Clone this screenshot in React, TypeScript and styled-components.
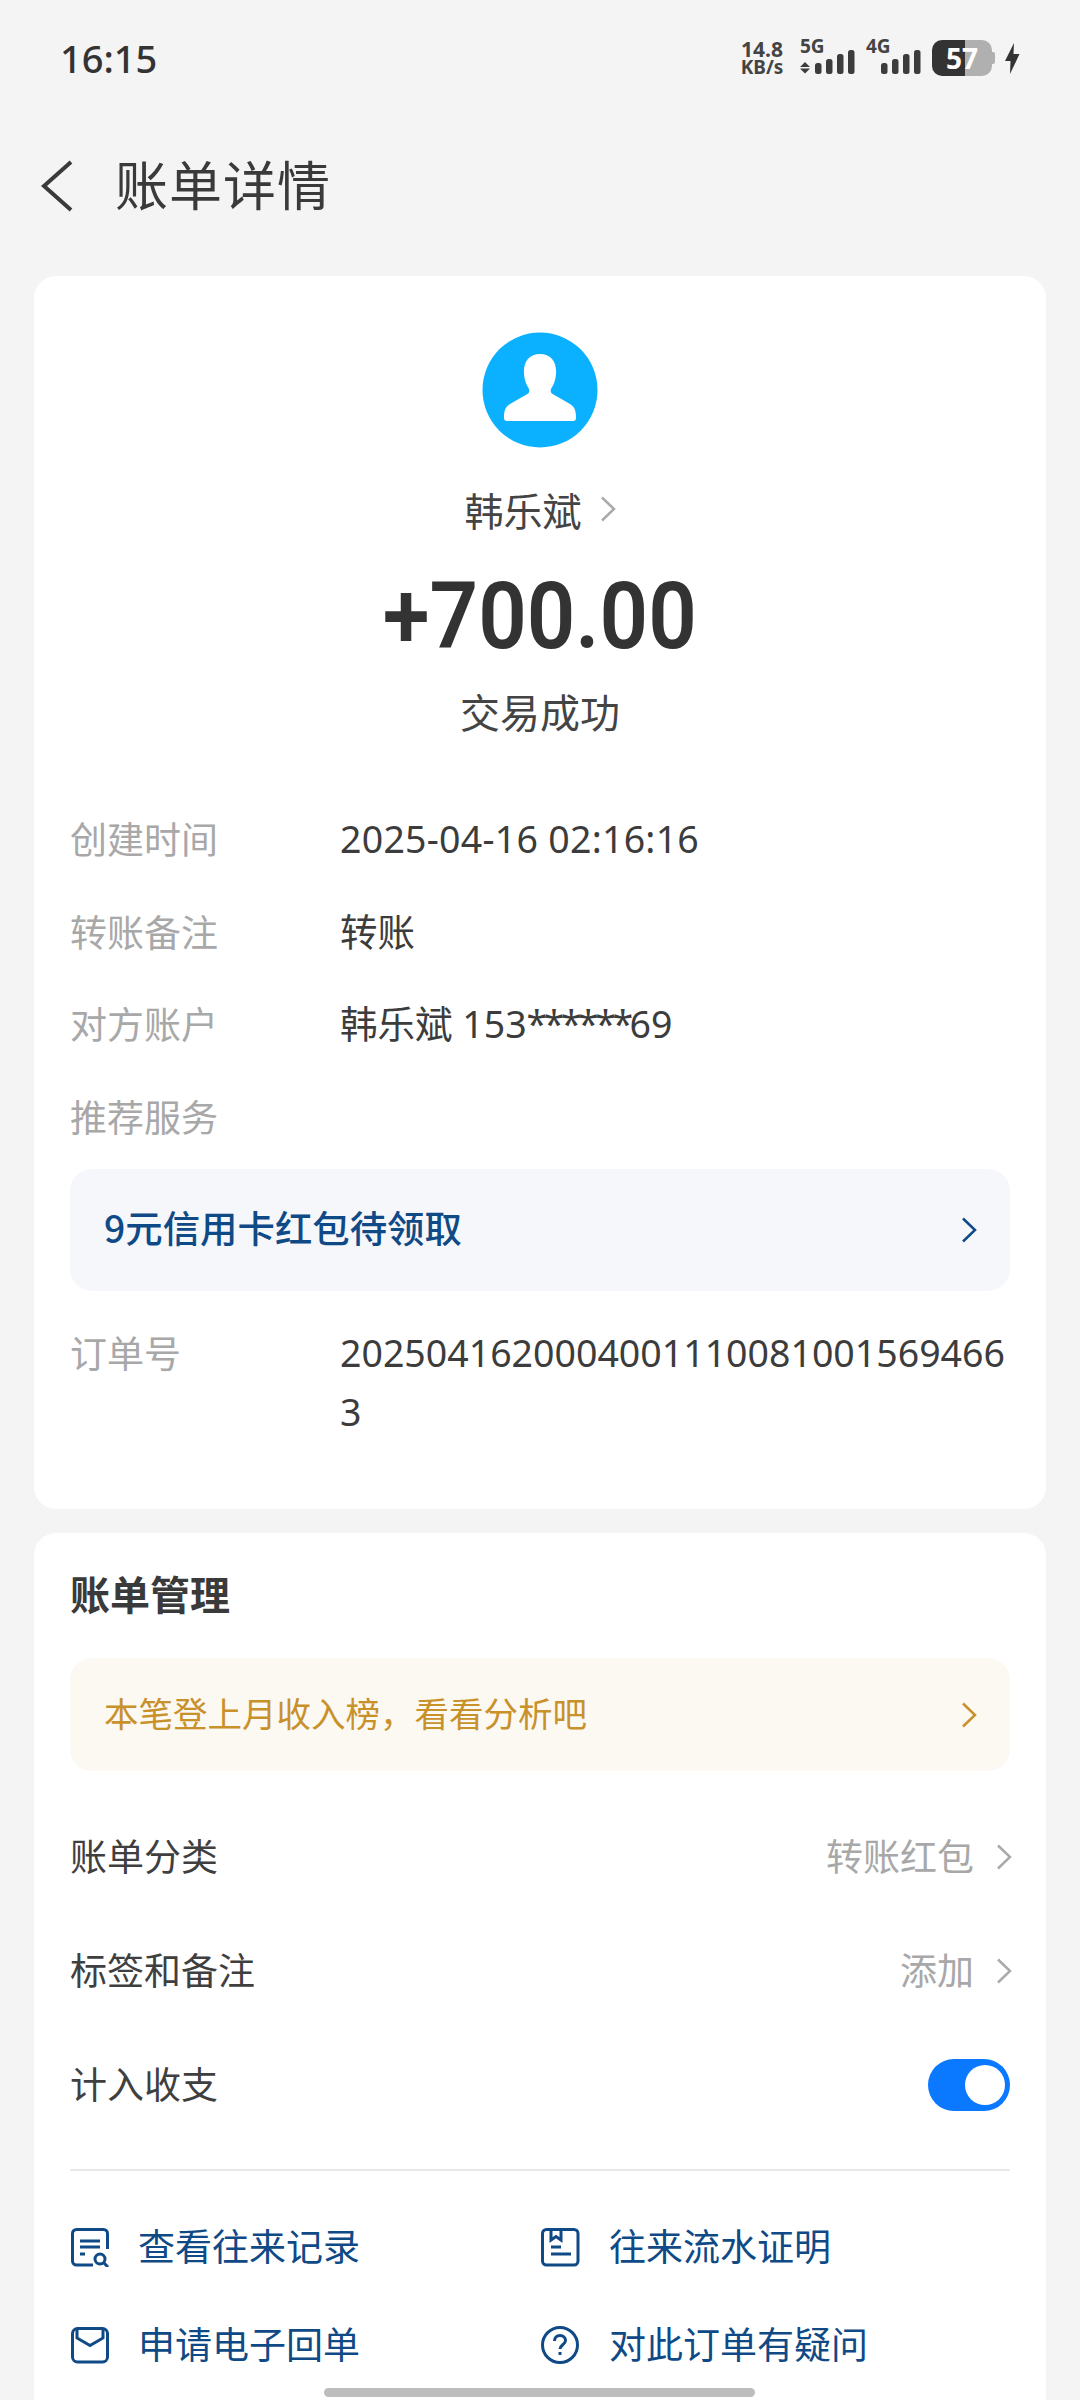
import styled, { createGlobalStyle } from "styled-components";

const GlobalStyle = createGlobalStyle`
  html, body {
    margin: 0;
    padding: 0;
    background: #f4f4f4;
  }
  body {
    font-family: "Noto Sans CJK SC", "Noto Sans", sans-serif;
  }
`;

const Page = styled.div`
  width: 1080px;
  height: 2400px;
  overflow: hidden;
  position: relative;
  background: #f4f4f4;
  color: #333;
`;

const StatusBar = styled.div`
  height: 116px;
  padding: 0 60px;
  display: flex;
  align-items: center;
  justify-content: space-between;
`;

const Clock = styled.span`
  font-family: "Noto Sans", sans-serif;
  font-size: 38px;
  font-weight: 500;
  color: #333;
`;

const StatusIcons = styled.div`
  display: flex;
  align-items: center;
  height: 50px;
`;

const Speed = styled.div`
  font-family: "Noto Sans", sans-serif;
  font-weight: 700;
  text-align: center;
  color: #444;
  width: 44px;
  margin-right: 16px;
`;

const SpeedValue = styled.div`
  font-size: 21px;
  line-height: 18px;
`;

const SpeedUnit = styled.div`
  font-size: 19px;
  line-height: 18px;
  white-space: nowrap;
`;

const Signal = styled.div`
  position: relative;
  width: 56px;
  height: 36px;
  margin-right: 10px;
`;

const SignalLabel = styled.span`
  position: absolute;
  left: 0;
  top: -4px;
  font-family: "Noto Sans", sans-serif;
  font-size: 19px;
  line-height: 20px;
  font-weight: 700;
  color: #444;
`;

const Battery = styled.div`
  width: 60px;
  height: 36px;
  border-radius: 10px;
  background: linear-gradient(to right, #333 0 55%, #b0b0b0 55% 100%);
  font-family: "Noto Sans", sans-serif;
  font-size: 28px;
  line-height: 36px;
  font-weight: 700;
  color: #fff;
  text-align: center;
`;

const Nib = styled.div`
  width: 3px;
  height: 12px;
  background: #b0b0b0;
  border-radius: 0 2px 2px 0;
  margin-right: 10px;
`;

const NavBar = styled.div`
  height: 160px;
  display: flex;
  align-items: center;
  gap: 41px;
  padding: 0 0 20px 40px;
  box-sizing: border-box;
`;

const NavTitle = styled.h1`
  margin: -7px 0 0;
  font-size: 53px;
  font-weight: 400;
  letter-spacing: 1px;
  color: #3a3a3a;
`;

const Card = styled.section<{ $height: number }>`
  box-sizing: border-box;
  width: 1012px;
  height: ${(p) => p.$height}px;
  margin: 0 34px 24px;
  padding: 0 36px;
  background: #fff;
  border-radius: 22px;
`;

const Summary = styled.div`
  display: flex;
  flex-direction: column;
  align-items: center;
  padding-top: 56px;
`;

const Name = styled.div`
  display: flex;
  align-items: center;
  gap: 18px;
  margin-top: 35px;
  font-size: 39px;
  line-height: 52px;
  color: #444;
`;

const Amount = styled.div`
  font-family: Roboto, "Noto Sans", sans-serif;
  font-size: 92px;
  line-height: 100px;
  font-weight: 600;
  color: #333;
  margin-top: 32px;
  transform: scaleX(0.925);
`;

const Status = styled.div`
  font-size: 40px;
  line-height: 52px;
  color: #444;
  margin-top: 18px;
`;

const Details = styled.div`
  margin-top: 57px;
`;

const DetailRow = styled.div<{ $height?: number }>`
  display: flex;
  min-height: ${(p) => p.$height ?? 92.5}px;
  align-items: flex-start;
  padding-top: 15px;
  box-sizing: border-box;
`;

const DetailLabel = styled.div`
  width: 270px;
  flex: none;
  font-size: 37px;
  line-height: 59px;
  color: #a8a8a8;
`;

const DetailValue = styled.div<{ $tracking?: number }>`
  flex: 1;
  min-width: 0;
  font-family: "Noto Sans", "Noto Sans CJK SC", sans-serif;
  font-size: 37.5px;
  line-height: 59px;
  letter-spacing: ${(p) => p.$tracking ?? 0}px;
  color: #3c3c3c;
  word-break: break-all;
`;

const Masked = styled.span`
  letter-spacing: -3.5px;
`;

const Banner = styled.div<{
  $bg: string;
  $fg: string;
  $height: number;
  $weight: number;
  $size: number;
  $after?: number;
}>`
  display: flex;
  align-items: center;
  justify-content: space-between;
  box-sizing: border-box;
  height: ${(p) => p.$height}px;
  margin-bottom: ${(p) => p.$after ?? 0}px;
  padding: 0 33px 0 34px;
  border-radius: 22px;
  background: ${(p) => p.$bg};
  color: ${(p) => p.$fg};
  font-size: ${(p) => p.$size}px;
  font-weight: ${(p) => p.$weight};
`;

const LiftedText = styled.span`
  margin-bottom: 5px;
`;

const SectionTitle = styled.h2`
  margin: 0;
  padding: 33px 0 38px;
  font-size: 40px;
  line-height: 54px;
  font-weight: 700;
  color: #3a3a3a;
`;

const ManageRow = styled.div`
  display: flex;
  align-items: center;
  justify-content: space-between;
  height: 114px;
  font-size: 37px;
  color: #3f3f3f;
`;

const RowValue = styled.span`
  display: flex;
  align-items: center;
  gap: 22px;
  margin-right: -2px;
  color: #a8a8a8;
`;

const Toggle = styled.span`
  position: relative;
  display: block;
  width: 82px;
  height: 52px;
  border-radius: 26px;
  background: #0a78ff;
`;

const Knob = styled.span`
  position: absolute;
  right: 5px;
  top: 6px;
  width: 40px;
  height: 40px;
  border-radius: 50%;
  background: #fff;
`;

const Divider = styled.hr`
  margin: 27px 0 46px;
  border: 0;
  border-top: 2px solid #e8e8e8;
`;

const ActionGrid = styled.div`
  display: grid;
  grid-template-columns: 471px 1fr;
  row-gap: 38px;
`;

const Action = styled.div`
  display: flex;
  align-items: center;
  gap: 28px;
  height: 60px;
  font-size: 37px;
  color: #0f4a86;
`;

const HomeBar = styled.div`
  position: absolute;
  left: 324px;
  bottom: 3px;
  width: 431px;
  height: 9px;
  border-radius: 5px;
  background: #bdbdbd;
`;

function Chevron({ color }: { color: string }) {
  return (
    <svg width="16" height="26" viewBox="0 0 16 26" fill="none">
      <path d="M2 1.500 L14 13 L2 24.500" stroke={color} strokeWidth="2.500" />
    </svg>
  );
}

function SignalBars({ arrows }: { arrows?: boolean }) {
  const bars = [11, 15, 20, 24];
  return (
    <svg width="56" height="36" viewBox="0 0 56 36">
      {bars.map((h, i) => (
        <rect key={h} x={15 + i * 11} y={34 - h} width="6.500" height={h} rx="2.500" fill="#3c3c3c" />
      ))}
      {arrows && <path d="M5 22 L10 27 H0 Z M0 28.500 H10 L5 33.500 Z" fill="#3c3c3c" />}
    </svg>
  );
}

function Avatar() {
  return (
    <svg width="116" height="116" viewBox="0 0 116 116">
      <circle cx="58" cy="58" r="57.500" fill="#0bb1ff" />
      <path
        d="M58 22c-11 0-17 8-16 20 .5 6 2 10 4.500 14 1.500 2.500 1 5-2 6.500L28 72c-5 3-6 7-6 14 0 2 1 3 3 3h66c2 0 3-1 3-3 0-7-1-11-6-14l-16.500-9.500c-3-1.500-3.500-4-2-6.500 2.500-4 4-8 4.500-14 1-12-5-20-16-20z"
        fill="#fff"
      />
    </svg>
  );
}

const actionIcons = {
  records: (
    <>
      <path d="M37.500 22V6.500a4 4 0 0 0-4-4H6.500a4 4 0 0 0-4 4V34a4 4 0 0 0 4 4H23" />
      <path d="M10 14h20M10 20h20M10 27h5" />
      <circle cx="30" cy="32" r="5" />
      <path d="M34 36l4 4" />
    </>
  ),
  proof: (
    <>
      <rect x="1.500" y="2.500" width="35.500" height="35.500" rx="4" />
      <path d="M10 2.500V13l5-3.500 5 3.500V2.500M10 20h10M10 27h20" />
    </>
  ),
  receipt: (
    <>
      <rect x="2.500" y="3.500" width="35" height="33.500" rx="5" />
      <path d="M7 5v8l13 7.500L33 13V5" />
    </>
  ),
  question: (
    <>
      <circle cx="19" cy="20" r="17.500" />
      <path d="M13.500 16c0-3.500 2.500-5.500 5.500-5.500s5.500 2 5.500 5c0 4-5.500 4.500-5.500 8.500" />
      <path d="M19 27v3" />
    </>
  ),
};

function ActionIcon({ name }: { name: keyof typeof actionIcons }) {
  return (
    <svg width="40" height="40" viewBox="0 0 40 40" fill="none" stroke="#0f4a86" strokeWidth="3">
      {actionIcons[name]}
    </svg>
  );
}

export default function App() {
  return (
    <Page>
      <GlobalStyle />
      <StatusBar>
        <Clock>16:15</Clock>
        <StatusIcons>
          <Speed>
            <SpeedValue>14.8</SpeedValue>
            <SpeedUnit>KB/s</SpeedUnit>
          </Speed>
          <Signal>
            <SignalLabel>5G</SignalLabel>
            <SignalBars arrows />
          </Signal>
          <Signal>
            <SignalLabel>4G</SignalLabel>
            <SignalBars />
          </Signal>
          <Battery>57</Battery>
          <Nib />
          <svg width="15" height="31" viewBox="0 0 15 31">
            <path d="M9 0 L0 18 H5.500 L5 31 L14.500 11 H8.500 Z" fill="#333" />
          </svg>
        </StatusIcons>
      </StatusBar>

      <NavBar>
        <svg width="34" height="52" viewBox="0 0 34 52" fill="none">
          <path d="M31 2 L4 26 L31 50" stroke="#3a3a3a" strokeWidth="4" />
        </svg>
        <NavTitle>账单详情</NavTitle>
      </NavBar>

      <Card $height={1233}>
        <Summary>
          <Avatar />
          <Name>
            韩乐斌
            <Chevron color="#aaa" />
          </Name>
          <Amount>+700.00</Amount>
          <Status>交易成功</Status>
        </Summary>
        <Details>
          <DetailRow>
            <DetailLabel>创建时间</DetailLabel>
            <DetailValue $tracking={0.25}>2025-04-16 02:16:16</DetailValue>
          </DetailRow>
          <DetailRow>
            <DetailLabel>转账备注</DetailLabel>
            <DetailValue>转账</DetailValue>
          </DetailRow>
          <DetailRow>
            <DetailLabel>对方账户</DetailLabel>
            <DetailValue>
              韩乐斌 153<Masked>******</Masked>69
            </DetailValue>
          </DetailRow>
          <DetailRow $height={97}>
            <DetailLabel>推荐服务</DetailLabel>
          </DetailRow>
          <Banner $bg="#f5f7fb" $fg="#0f4a86" $height={122} $weight={500} $size={37.4} $after={17}>
            <LiftedText>9元信用卡红包待领取</LiftedText>
            <Chevron color="#0f4a86" />
          </Banner>
          <DetailRow>
            <DetailLabel>订单号</DetailLabel>
            <DetailValue>20250416200040011100810015694663</DetailValue>
          </DetailRow>
        </Details>
      </Card>

      <Card $height={900}>
        <SectionTitle>账单管理</SectionTitle>
        <Banner $bg="#fcf8f2" $fg="#c8912a" $height={113} $weight={400} $size={34.5} $after={29}>
          <LiftedText>本笔登上月收入榜，看看分析吧</LiftedText>
          <Chevron color="#c8912a" />
        </Banner>
        <ManageRow>
          <LiftedText>账单分类</LiftedText>
          <RowValue>
            <LiftedText>转账红包</LiftedText>
            <Chevron color="#aaa" />
          </RowValue>
        </ManageRow>
        <ManageRow>
          <LiftedText>标签和备注</LiftedText>
          <RowValue>
            <LiftedText>添加</LiftedText>
            <Chevron color="#aaa" />
          </RowValue>
        </ManageRow>
        <ManageRow>
          <LiftedText>计入收支</LiftedText>
          <Toggle>
            <Knob />
          </Toggle>
        </ManageRow>
        <Divider />
        <ActionGrid>
          <Action>
            <ActionIcon name="records" />
            <LiftedText>查看往来记录</LiftedText>
          </Action>
          <Action>
            <ActionIcon name="proof" />
            <LiftedText>往来流水证明</LiftedText>
          </Action>
          <Action>
            <ActionIcon name="receipt" />
            <LiftedText>申请电子回单</LiftedText>
          </Action>
          <Action>
            <ActionIcon name="question" />
            <LiftedText>对此订单有疑问</LiftedText>
          </Action>
        </ActionGrid>
      </Card>
      <HomeBar />
    </Page>
  );
}
